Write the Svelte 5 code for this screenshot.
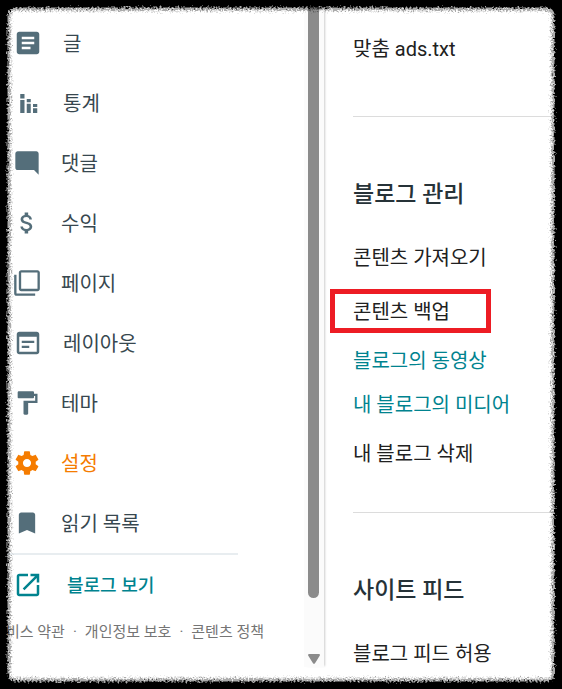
<script lang="ts">
  type NavItem = { label: string; path: string; wide?: boolean; active?: boolean }

  const navItems: NavItem[] = [
    {
      label: '글',
      wide: true,
      path: 'M19 3H5c-1.1 0-2 .9-2 2v14c0 1.1.9 2 2 2h14c1.1 0 2-.9 2-2V5c0-1.1-.9-2-2-2zm-5 14H7v-2h7v2zm3-4H7v-2h10v2zm0-4H7V7h10v2z'
    },
    {
      label: '통계',
      wide: true,
      path: 'M5.8 4.8h3.4v3.6H5.8zM5.8 9.5h3.4V20H5.8zM11 8.8h3.2v2.6H11zM11 12.6h3.2V20H11zM16 12.8h3.4v2.3H16zM16 16.2h3.4V20H16z'
    },
    {
      label: '댓글',
      path: 'M21.99 4c0-1.1-.89-2-1.99-2H4c-1.1 0-2 .9-2 2v12c0 1.1.9 2 2 2h14l4 4-.01-18z'
    },
    {
      label: '수익',
      path: 'M11.8 10.9c-2.27-.59-3-1.2-3-2.15 0-1.09 1.01-1.85 2.7-1.85 1.78 0 2.44.85 2.5 2.1h2.21c-.07-1.72-1.12-3.3-3.21-3.81V3h-3v2.16c-1.94.42-3.5 1.68-3.5 3.61 0 2.31 1.91 3.46 4.7 4.13 2.5.6 3 1.48 3 2.41 0 .69-.49 1.79-2.7 1.79-2.06 0-2.87-.92-2.98-2.1h-2.2c.12 2.19 1.76 3.42 3.68 3.83V21h3v-2.15c1.95-.37 3.5-1.5 3.5-3.55 0-2.84-2.43-3.81-4.7-4.4z'
    },
    {
      label: '페이지',
      path: 'M3 5H1v16c0 1.1.9 2 2 2h16v-2H3V5zm18-4H7c-1.1 0-2 .9-2 2v14c0 1.1.9 2 2 2h14c1.1 0 2-.9 2-2V3c0-1.1-.9-2-2-2zm0 16H7V3h14v14z'
    },
    {
      label: '레이아웃',
      wide: true,
      path: 'M19 3H5c-1.11 0-2 .9-2 2v14c0 1.1.89 2 2 2h14c1.1 0 2-.9 2-2V5c0-1.1-.9-2-2-2zm0 16H5V7h14v12zM17 12H7v-1.8h10V12zm-4 4H7v-1.8h6V16z'
    },
    {
      label: '테마',
      path: 'M18 4V3c0-.55-.45-1-1-1H5c-.55 0-1 .45-1 1v4c0 .55.45 1 1 1h12c.55 0 1-.45 1-1V6h1v4H9v11c0 .55.45 1 1 1h2c.55 0 1-.45 1-1v-9h8V4h-3z'
    },
    {
      label: '설정',
      active: true,
      path: 'M19.43 12.98c.04-.32.07-.64.07-.98s-.03-.66-.07-.98l2.11-1.65c.19-.15.24-.42.12-.64l-2-3.46c-.12-.22-.39-.3-.61-.22l-2.49 1c-.52-.4-1.08-.73-1.69-.98l-.38-2.65C14.46 2.18 14.25 2 14 2h-4c-.25 0-.46.18-.49.42l-.38 2.65c-.61.25-1.17.59-1.69.98l-2.49-1c-.23-.09-.49 0-.61.22l-2 3.46c-.13.22-.07.49.12.64l2.11 1.65c-.04.32-.07.65-.07.98s.03.66.07.98l-2.11 1.65c-.19.15-.24.42-.12.64l2 3.46c.12.22.39.3.61.22l2.49-1c.52.4 1.08.73 1.69.98l.38 2.65c.03.24.24.42.49.42h4c.25 0 .46-.18.49-.42l.38-2.65c.61-.25 1.17-.59 1.69-.98l2.49 1c.23.09.49 0 .61-.22l2-3.46c.12-.22.07-.49-.12-.64l-2.11-1.65zM12 15.5c-1.93 0-3.5-1.57-3.5-3.5s1.57-3.5 3.5-3.5 3.5 1.57 3.5 3.5-1.57 3.5-3.5 3.5z'
    },
    {
      label: '읽기 목록',
      path: 'M17 3H7c-1.1 0-2 .9-2 2v16l7-3 7 3V5c0-1.1-.9-2-2-2z'
    }
  ]
</script>

<div class="page">
  <aside class="sidebar">
    <nav>
      {#each navItems as item}
        <a class="nav-item" class:wide={item.wide} class:active={item.active} href="#menu">
          <svg viewBox="0 0 24 24" aria-hidden="true"><path d={item.path} /></svg>
          <span>{item.label}</span>
        </a>
      {/each}
    </nav>

    <a class="view-blog" href="#blog">
      <svg viewBox="0 0 24 24" aria-hidden="true">
        <path d="M19 19H5V5h7V3H5c-1.11 0-2 .9-2 2v14c0 1.1.89 2 2 2h14c1.1 0 2-.9 2-2v-7h-2v7zM14 3v2h3.59l-9.83 9.83 1.41 1.41L19 6.41V10h2V3h-7z" />
      </svg>
      <span>블로그 보기</span>
    </a>

    <div class="legal">
      <a href="#terms">비스 약관</a>
      <span>·</span>
      <a href="#privacy">개인정보 보호</a>
      <span>·</span>
      <a href="#policy">콘텐츠 정책</a>
    </div>
  </aside>

  <div class="scrollbar" aria-hidden="true">
    <div class="thumb"></div>
    <svg class="arrow" viewBox="0 0 12 10"><path d="M1.2 0h9.6c1 0 1.5 1 .9 1.8L7 9.2c-.5.8-1.5.8-2 0L.3 1.8C-.2 1 .3 0 1.2 0z" /></svg>
  </div>

  <main>
    <section class="monetize">
      <button class="row">맞춤 ads.txt</button>
    </section>

    <section>
      <h2>블로그 관리</h2>
      <button class="row">콘텐츠 가져오기</button>
      <button class="row marked">콘텐츠 백업</button>
      <a class="row link" href="#videos">블로그의 동영상</a>
      <a class="row link" href="#media">내 블로그의 미디어</a>
      <button class="row">내 블로그 삭제</button>
    </section>

    <section>
      <h2>사이트 피드</h2>
      <button class="row">블로그 피드 허용</button>
    </section>
  </main>

  <!-- torn paper edge -->
  <svg class="frame" aria-hidden="true">
    <filter id="fuzz">
      <feTurbulence type="fractalNoise" baseFrequency="0.6" numOctaves="2" seed="4" />
      <feDisplacementMap in="SourceGraphic" scale="9" xChannelSelector="R" yChannelSelector="G" />
      <feGaussianBlur stdDeviation="0.6" />
    </filter>
    <filter id="torn">
      <feTurbulence type="fractalNoise" baseFrequency="0.5" numOctaves="3" seed="9" />
      <feDisplacementMap in="SourceGraphic" scale="7" xChannelSelector="G" yChannelSelector="R" />
    </filter>
    <rect class="edge pale" />
    <rect class="edge grey" />
    <rect class="edge black" />
  </svg>
</div>

<style>
  :global(body) {
    background: #fff;
  }

  .page {
    position: relative;
    display: grid;
    grid-template-columns: 304px 20px 1fr;
    min-height: 100vh;
    overflow: hidden;
    background: #fff;
    font-family: Roboto, 'Noto Sans CJK KR', sans-serif;
    font-size: 20px;
    color: #212121;
  }

  a {
    color: inherit;
    text-decoration: none;
  }

  .sidebar {
    padding-top: 13px;
    color: #37474f;
  }

  nav {
    width: 238px;
    border-bottom: 2px solid #e8edf0;
  }

  .nav-item,
  .view-blog {
    display: flex;
    align-items: center;
    gap: 20px;
    height: 60px;
    padding-left: 13px;
    white-space: nowrap;
  }

  .nav-item span,
  .view-blog span {
    padding-bottom: 2px;
  }

  .nav-item svg {
    width: 28px;
    height: 28px;
    fill: #546e7a;
  }

  .nav-item.wide svg,
  .view-blog svg {
    width: 30px;
    height: 30px;
  }

  .nav-item.active {
    color: #f57c00;
  }

  .nav-item.active svg {
    fill: #f57c00;
  }

  .view-blog {
    gap: 24px;
    font-size: 18px;
    font-weight: 500;
    color: #00838f;
  }

  .view-blog svg {
    fill: #00838f;
  }

  .legal {
    display: flex;
    gap: 8px;
    padding: 5px 0 0 6px;
    font-size: 15px;
    line-height: 24px;
    color: #757575;
    white-space: nowrap;
  }

  .scrollbar {
    display: flex;
    flex-direction: column;
    align-items: center;
    gap: 56px;
    margin-bottom: 22px;
    padding: 0 1px 3px 0;
    background: #fbfbfb;
    box-shadow: 2px 0 2px -1px rgba(0, 0, 0, 0.2);
  }

  .thumb {
    flex: 1;
    width: 11px;
    border-radius: 0 0 6px 6px;
    background: #8b8b8b;
  }

  .arrow {
    width: 12px;
    height: 10px;
    fill: #8b8b8b;
  }

  main {
    padding-left: 29px;
  }

  section {
    display: flex;
    flex-direction: column;
    align-items: flex-start;
    padding: 62px 0 32px;
    border-top: 1px solid #dcdcdc;
  }

  section:last-child {
    padding-bottom: 0;
  }

  .monetize {
    padding: 21px 0 41px;
    border-top: 0;
  }

  h2 {
    margin: 0 0 19px;
    font-size: 23px;
    font-weight: 500;
    line-height: 32px;
    color: #263238;
  }

  .row {
    position: relative;
    display: flex;
    align-items: center;
    box-sizing: border-box;
    height: 54px;
    padding: 0 0 2px;
    border: 0;
    background: none;
    font: inherit;
    color: inherit;
    white-space: nowrap;
    cursor: pointer;
  }

  .link {
    height: 44px;
    color: #00838f;
  }

  .marked::after {
    content: '';
    position: absolute;
    inset: 5px -41px 5px -23px;
    border: 5px solid #ed1c24;
  }

  .frame {
    position: absolute;
    inset: 0;
    width: 100%;
    height: 100%;
    pointer-events: none;
  }

  .edge {
    x: -7px;
    y: -7px;
    width: calc(100% + 14px);
    height: calc(100% + 14px);
    rx: 22px;
    fill: none;
  }

  .pale {
    stroke: rgba(0, 0, 0, 0.14);
    stroke-width: 37px;
    filter: url(#fuzz);
  }

  .grey {
    stroke: rgba(0, 0, 0, 0.22);
    stroke-width: 34px;
    filter: url(#fuzz);
  }

  .black {
    stroke: #000;
    stroke-width: 29px;
    filter: url(#torn);
  }
</style>
